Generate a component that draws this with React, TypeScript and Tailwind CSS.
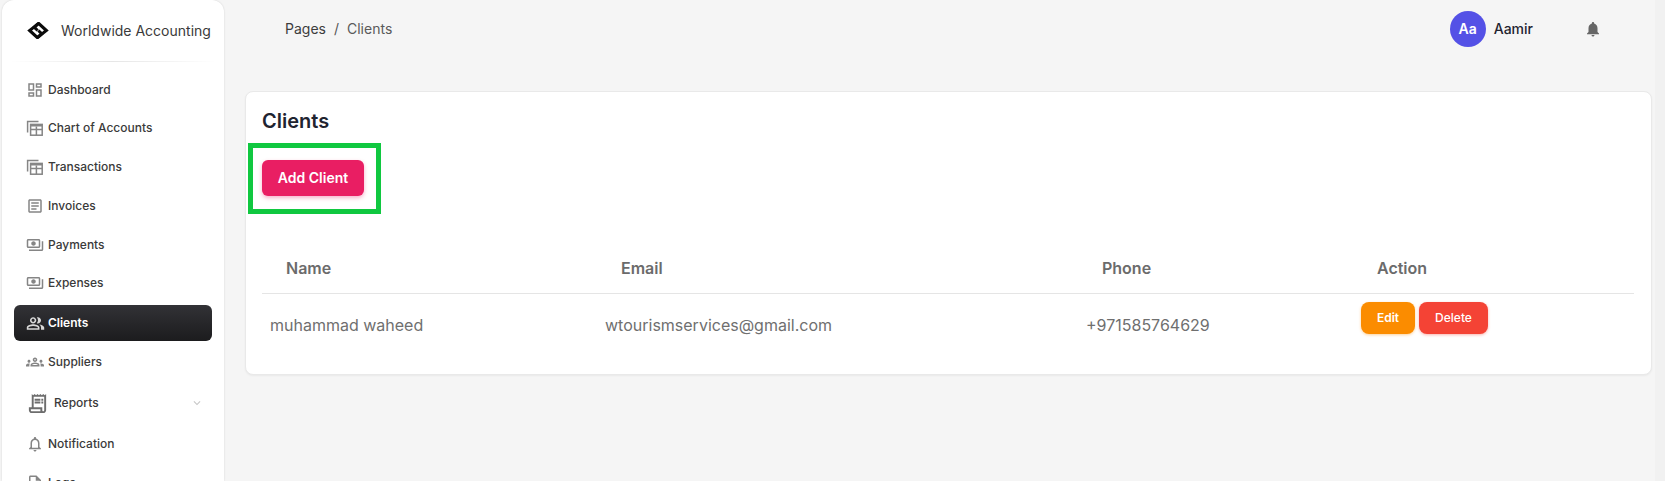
import React from "react";
import {
  MdOutlineDashboard,
  MdOutlineArticle,
  MdOutlinePayments,
  MdOutlinePeopleAlt,
  MdOutlineGroups,
  MdOutlineReceiptLong,
  MdOutlineNotifications,
  MdOutlineInsertDriveFile,
  MdNotifications,
  MdExpandMore,
} from "react-icons/md";

function TableStack({ className }: { className?: string }) {
  return (
    <svg className={className} viewBox="0 0 18 18" fill="none" stroke="currentColor" strokeWidth="1.5">
      <path d="M1.6 13.5V2.6h10.9" />
      <rect x="4.6" y="5.4" width="11.6" height="10.8" />
      <path d="M4.6 10.4h11.6M10.4 7.4v8.8" />
      <path d="M4.6 6.4h11.6" strokeWidth="2" />
    </svg>
  );
}

const items = [
  { label: "Dashboard", Icon: MdOutlineDashboard, h: "h-[37px]" },
  { label: "Chart of Accounts", Icon: TableStack, h: "h-[39px]" },
  { label: "Transactions", Icon: TableStack, h: "h-[39px]" },
  { label: "Invoices", Icon: MdOutlineArticle, h: "h-[39px]" },
  { label: "Payments", Icon: MdOutlinePayments, h: "h-[39px]" },
  { label: "Expenses", Icon: MdOutlinePayments, h: "h-[38px]" },
];

function Logo() {
  return (
    <svg width="22" height="17" viewBox="0.5 0 20 16" fill="none" stroke="#0b0b0b" strokeWidth="2.9">
      <path d="M10.5 1.8 2.6 8l7.4 6.8 4-3.8-3.2-3" />
      <path d="M10.5 14.2 18.4 8 11 1.2 7 5l3.2 3" />
    </svg>
  );
}

function Row({ label, Icon, h }: { label: string; Icon: React.ComponentType<{ className?: string }>; h: string }) {
  return (
    <div className={`flex items-center ${h} pl-[24px]`}>
      <Icon className="w-[18px] h-[18px] text-[#858585] shrink-0" />
      <span className="ml-[4px] text-[12px] font-medium text-[#3a3a3a]">{label}</span>
    </div>
  );
}

export default function App() {
  return (
    <div className="flex h-[481px] overflow-hidden bg-[#f5f5f5] font-['Inter',sans-serif]">
      <aside className="ml-[2px] w-[222px] h-[481px] shrink-0 overflow-hidden bg-white rounded-t-xl shadow-[0_0_2px_rgba(0,0,0,0.15)]">
        <div className="flex items-center h-[61px] pl-[25px]">
          <Logo />
          <span className="ml-[12px] text-[14px] text-[#3a3a3a] whitespace-nowrap">Worldwide Accounting</span>
        </div>
        <div className="h-px mx-[8px] bg-gradient-to-r from-transparent via-[#e6e6e6] to-transparent" />
        <div className="pt-[9px]">
          {items.map((i) => (
            <Row key={i.label} {...i} />
          ))}
          <div className="mx-[12px] mt-[3px] h-[36px] flex items-center pl-[12px] rounded-md bg-gradient-to-b from-[#323236] to-[#1c1c1e]">
            <MdOutlinePeopleAlt className="w-[19px] h-[19px] text-[#d8d8d8]" />
            <span className="ml-[3px] text-[12px] font-semibold text-white">Clients</span>
          </div>
          <div className="mt-[1px]">
            <Row label="Suppliers" Icon={MdOutlineGroups} h="h-[40px]" />
          </div>
          <div className="flex items-center h-[42px] pl-[24px] pr-[20px]">
            <MdOutlineReceiptLong className="w-[23px] h-[23px] text-[#6d6d6d]" />
            <span className="ml-[5px] text-[12px] font-medium text-[#3a3a3a]">Reports</span>
            <MdExpandMore className="ml-auto w-[14px] h-[14px] text-[#c8c8c8]" />
          </div>
          <Row label="Notification" Icon={MdOutlineNotifications} h="h-[40px]" />
          <Row label="Logs" Icon={MdOutlineInsertDriveFile} h="h-[38px]" />
        </div>
      </aside>

      <main className="flex-1 min-w-0 pl-[21px] pr-[3px]">
        <header className="flex items-center h-[57px] pl-[40px] pr-[50px]">
          <span className="text-[14px] text-[#3d3d3d]">Pages</span>
          <span className="mx-[8px] text-[14px] text-[#555]">/</span>
          <span className="text-[14px] text-[#5a5a5a]">Clients</span>
          <div className="ml-auto flex items-center">
            <div className="w-[36px] h-[36px] rounded-full bg-[#5451e6] text-white text-[14px] font-semibold flex items-center justify-center">Aa</div>
            <span className="ml-[8px] text-[14px] font-medium text-[#1f2430]">Aamir</span>
            <MdNotifications className="ml-[51px] w-[18px] h-[18px] text-[#666]" />
          </div>
        </header>

        <section className="mt-[34px] h-[284px] bg-white rounded-lg border border-[#e9e9e9] shadow-[0_1px_2px_rgba(0,0,0,0.05)] px-[16px] pt-[16px]">
          <h1 className="text-[20px] leading-[26px] font-semibold text-[#1f2430]">Clients</h1>
          <div className="-ml-[14px] mt-[9px] w-[133px] h-[71px] border-[5px] border-[#10c840] pl-[9px] pt-[12px]">
            <button className="w-[102px] h-[36px] pb-[1px] rounded-md bg-[#e91e63] text-white text-[14px] font-semibold shadow-[0_2px_4px_rgba(233,30,99,0.35)]">
              Add Client
            </button>
          </div>
          <table className="mt-[35px] w-[1372px] table-fixed border-collapse">
            <colgroup>
              <col className="w-[335px]" />
              <col className="w-[481px]" />
              <col className="w-[275px]" />
              <col />
            </colgroup>
            <thead>
              <tr className="h-[44px] border-b border-[#e5e5e5]">
                <th className="px-6 pb-[6px] text-left text-[16px] font-semibold text-[#6b6b6b]">Name</th>
                <th className="px-6 pb-[6px] text-left text-[16px] font-semibold text-[#6b6b6b]">Email</th>
                <th className="px-6 pb-[6px] text-left text-[16px] font-semibold text-[#6b6b6b]">Phone</th>
                <th className="px-6 pb-[6px] text-left text-[16px] font-semibold text-[#6b6b6b]">Action</th>
              </tr>
            </thead>
            <tbody>
              <tr>
                <td className="px-2 pt-[19px] align-top text-[16px] text-[#6f6f6f]">muhammad waheed</td>
                <td className="px-2 pt-[19px] align-top text-[16px] text-[#6f6f6f]">wtourismservices@gmail.com</td>
                <td className="px-2 pt-[19px] align-top text-[16px] text-[#6f6f6f]">+971585764629</td>
                <td className="px-2 pt-[8px] align-top">
                  <div className="flex gap-[4px]">
                    <button className="w-[54px] h-[32px] rounded-lg bg-[#fb8c00] text-white text-[12px] font-semibold shadow-[0_1px_3px_rgba(251,140,0,0.4)]">Edit</button>
                    <button className="w-[69px] h-[32px] rounded-lg bg-[#f44335] text-white text-[12px] font-medium shadow-[0_1px_3px_rgba(244,67,53,0.4)]">Delete</button>
                  </div>
                </td>
              </tr>
            </tbody>
          </table>
        </section>
      </main>
      <div className="w-[10px] shrink-0 bg-[#f1f1f1]" />
    </div>
  );
}
